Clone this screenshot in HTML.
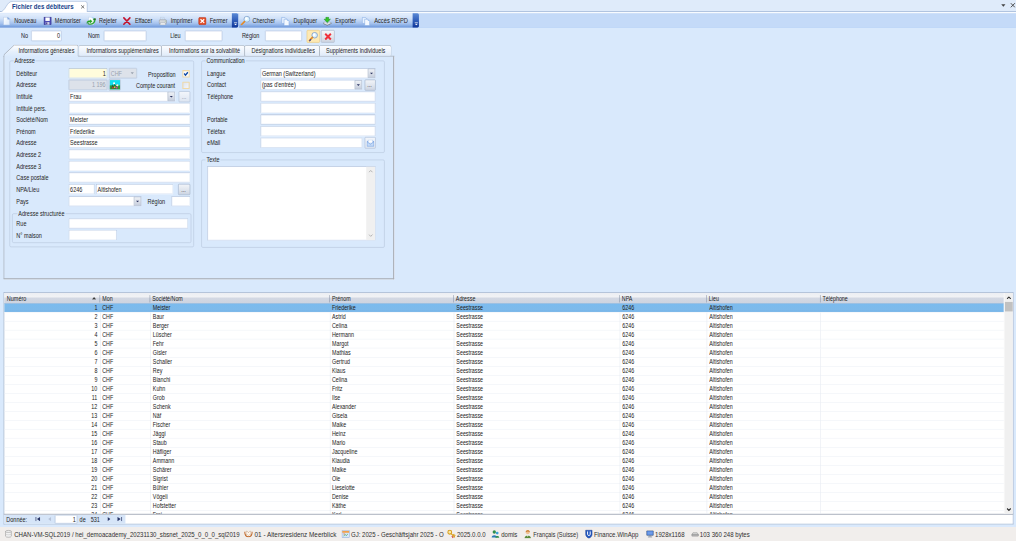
<!DOCTYPE html>
<html lang="fr"><head><meta charset="utf-8"><title>Fichier des débiteurs</title>
<style>
html,body{margin:0;padding:0;background:#d9e9fc;overflow:hidden;width:1016px;height:541px;}
#app{-webkit-text-stroke:0.05px;position:absolute;left:0;top:0;width:1928px;height:1027px;transform-origin:0 0;background:#d9e9fc;font-family:"Liberation Sans",sans-serif;font-size:11px;color:#262626;overflow:hidden;}
#app *{box-sizing:border-box;}
.a{position:absolute;white-space:nowrap;}
.t{position:absolute;white-space:nowrap;line-height:14px;height:14px;}
/* document tab strip */
#dts{left:0;top:0;width:1928px;height:23px;background:#dfebfa;border-bottom:2px solid #aec2de;}
#dtab{left:0px;top:2px;width:168px;height:22px;}
#dtab .t{left:22.500px;top:4px;font-weight:bold;color:#15428b;font-size:11.5px;}
#tbbg{left:0;top:23px;width:1928px;height:29.5px;background:#c4daf8;border-top:2px solid #fff;border-bottom:1px solid #bdd6f7;}
.ts{top:25px;height:27px;border-radius:0 3px 3px 0;background:linear-gradient(#e6f0fd 0%,#cfe0f8 38%,#a6c3ee 72%,#7fa6e2 92%,#6a93d6 100%);}
.ts .ov{position:absolute;right:0;top:0;width:12px;height:27px;border-radius:0 3px 3px 0;background:linear-gradient(#5b8ad6 0%,#3563bd 45%,#11389a 100%);}
.ts .ov:after{content:"";position:absolute;left:4px;bottom:4px;border:3px solid transparent;border-top:3px solid #fff;border-bottom:0;}
.ts .ov:before{content:"";position:absolute;left:4px;bottom:9px;width:6px;height:1px;background:#fff;}
.ts .t{top:7px;}
.ic{position:absolute;width:16px;height:16px;top:6.500px;}
/* inputs */
.in{position:absolute;height:20px;background:#fff;border:1px solid #9ab2d7;border-color:#819bc4 #a3badb #a3badb #8aa3ca;box-shadow:inset 0 0 0 1px #d9e4f4;border-radius:1.500px;line-height:16px;padding:2px 2px 0 2px;font-size:11px;white-space:nowrap;overflow:hidden;}
.in.r{text-align:right;}
.in.y{background:#fffcdc;}
.in.g{background:#dde2ea;color:#9aa3b0;border-color:#b4c2d8;box-shadow:inset 0 0 0 1px #d0d9e6;}
.dd{position:absolute;right:0;top:0;width:14px;height:18px;background:linear-gradient(#eff2f7,#dde2eb 45%,#c5cddc);border:1px solid #97a6bd;border-radius:1px;}
.dd:after{content:"";position:absolute;left:3px;top:6.500px;border:3px solid transparent;border-top:3.500px solid #2a3360;border-bottom:0;}
.btn{position:absolute;height:21px;background:linear-gradient(#f3f6fb,#dde5f1);border:1px solid #aab9cf;border-radius:2px;text-align:center;line-height:21px;font-size:11px;color:#8a96a8;}
/* tabs */
.tab{position:absolute;top:86px;height:20px;border:1px solid #92979f;border-bottom:0;border-radius:3px 4px 0 0;background:linear-gradient(#fcfdff,#eef4fc 50%,#e0ebf9);text-align:center;line-height:20px;white-space:nowrap;}
.tab.act{top:85px;height:22px;background:#d9e9fc;z-index:3;line-height:20px;}
#page{left:7px;top:106px;width:740.500px;height:423.500px;border:1px solid #9a9fa6;border-top-color:#999ea6;border-bottom:2px solid #a8acb2;border-right:2px solid #a8acb2;background:#d9e9fc;box-shadow:1px 1px 0 #ecf3fd;}
.gb{position:absolute;border:1px solid #b3c2d9;border-radius:3px;}
.gb>.lg{position:absolute;top:-8px;left:7px;background:#d9e9fc;padding:0 2px;line-height:14px;height:14px;white-space:nowrap;}
.cb{position:absolute;width:14px;height:14px;border:2px solid #f0d9a8;border-radius:1px;background:linear-gradient(135deg,#dfe5ef,#f4f6fa);}
/* grid */
#grid{left:7px;top:555px;width:1916px;height:422px;background:#fff;border:1px solid #8398b8;border-bottom:2px solid #a4abb8;overflow:hidden;}
#gh{position:absolute;left:0;top:0;width:1897px;height:20px;background:linear-gradient(#eceef3 0%,#f1f2f5 38%,#d3d8e3 52%,#ced4e0 100%);border-bottom:1px solid #7d92b6;}
#gh span{position:absolute;top:0;height:19px;line-height:22px;padding-left:4px;font-size:10.5px;}
#gh span:before{content:"";position:absolute;left:-1px;top:4px;width:1px;height:14px;background:#8792a5;}
#gh span:first-child:before{display:none;}
.gr{position:absolute;left:0;width:1897px;height:17.1px;border-bottom:1px solid #ecf0f6;}
.gr.sel{background:linear-gradient(#7bbbee,#7ebaeb 70%,#74b3e8);}
.c{position:absolute;top:0;height:17px;line-height:17px;font-size:10.5px;white-space:nowrap;overflow:hidden;padding-left:4px;border-left:1px solid #e3e8f0;}
.gr.sel .c{border-left-color:transparent;}
.c1{left:0;width:182px;text-align:right;padding-right:5px;border-left:0;}
.c2{left:182px;width:95px;padding-left:2.500px;}
.c3{left:277px;width:341px;}
.c4{left:618px;width:235px;padding-left:2.500px;}
.c5{left:853px;width:315px;}
.c6{left:1168px;width:165px;}
.c7{left:1333px;width:216px;}
.c8{left:1549px;width:348px;}
#vsb{position:absolute;right:0;top:0;width:17px;height:419px;background:#f0f0f0;border-left:1px solid #fff;}
#nav{left:7px;top:977px;width:1916px;height:17.500px;background:#fff;border:1px solid #8fa5c5;border-top:0;}
#navl{position:absolute;left:0;top:0;width:230px;height:16.500px;background:#d6e5f8;}
#sb{left:0;top:1000px;width:1928px;height:27px;background:#f1eeec;font-size:12px;}
#sb .t{top:7px;font-size:12px;line-height:14px;color:#303030;font-family:"Liberation Sans","DejaVu Sans",sans-serif;}
.si{position:absolute;top:6px;width:14px;height:14px;}

.t{font-size:12.6px;transform:scaleX(.83);transform-origin:0 50%;}
i{display:inline-block;font-style:normal;font-size:12.6px;transform:scaleX(.83);transform-origin:0 50%;white-space:nowrap;}
.in.r>i,.c1>i{transform-origin:100% 50%;}
.tab>i{transform-origin:50% 50%;}
#dtab .t{font-size:12.6px;transform:scaleX(.92);}
#sb .t{font-size:13px;transform:scaleX(.886);top:7.800px;-webkit-text-stroke:0;}

.gb>.lg{font-size:12.6px;transform:scaleX(.83);transform-origin:0 50%;}

#grid{-webkit-text-stroke:0;}
#grid i{font-size:12.2px;color:#1a1a1a;}

.in>i{vertical-align:top;line-height:17px;height:17px;}

.in.f{box-shadow:inset 0 0 0 1px #f2f6fb;border-color:#a4bada;}

.btn.d{background:linear-gradient(#f2f4f8,#e1e6ee 50%,#ccd4e1);border-color:#9aa7bb;color:#4a3a3a;}

</style></head>
<body>
<div id="app" style="transform:scale(0.52697);">
<!-- document tab strip -->
<div id="dts" class="a"></div>
<div id="dtab" class="a">
<svg class="a" style="left:0;top:0" width="168" height="23" viewBox="0 0 168 23"><path d="M-1 21.500 C5 20.500 8 16 11.500 10.500 C15 5 17.500 0.500 25 0.500 L161 0.500 Q165.500 0.500 165.500 5 L165.500 23 L-1 23 Z" fill="#fff" stroke="#8faad2" stroke-width="1"/><rect x="0" y="21.500" width="168" height="2" fill="#fff"/></svg>
<span class="t">Fichier des débiteurs</span>
<svg class="a" style="left:152.500px;top:6.500px" width="8" height="8" viewBox="0 0 8 8"><path d="M1 1 L7 7 M7 1 L1 7" stroke="#555" stroke-width="1.500" fill="none"/></svg>
</div>
<svg class="a" style="left:1899px;top:7px" width="10" height="8" viewBox="0 0 10 8"><path d="M1 1 L9 1 L5 6 Z" fill="#444"/></svg>
<svg class="a" style="left:1916.5px;top:5px" width="10" height="10" viewBox="0 0 10 10"><path d="M1 1 L9 9 M9 1 L1 9" stroke="#444" stroke-width="1.8" fill="none"/></svg>

<!-- toolbars -->
<div id="tbbg" class="a"></div>
<div class="ts a" style="left:0;width:452px">
  <svg class="ic" style="left:6px" viewBox="0 0 16 16"><defs><linearGradient id="gdoc" x1="0" y1="0" x2="1" y2="1"><stop offset="0" stop-color="#ffffff"/><stop offset="1" stop-color="#d9e8fb"/></linearGradient></defs><path d="M0.500 0.500 L8.500 0.500 L12.500 4.500 L12.500 15.500 L0.500 15.500 Z" fill="url(#gdoc)" stroke="#a9c0e2"/><path d="M8.500 0.500 L8.500 4.500 L12.500 4.500 Z" fill="#7aa7e6" stroke="#86a9dd" stroke-width=".6"/></svg>
  <span class="t" style="left:27px">Nouveau</span>
  <svg class="ic" style="left:82px;width:16.500px;height:17.500px;top:5.500px" viewBox="0 0 16 16" preserveAspectRatio="none"><rect x="1.5" y="1.5" width="13" height="13" fill="#4c4cb6" stroke="#34348c"/><rect x="4" y="2" width="8" height="6" fill="#fff"/><rect x="4.500" y="10" width="7" height="4.500" fill="#cfd3e6"/><rect x="5.500" y="10.500" width="2" height="3.500" fill="#3a2f8a"/></svg>
  <span class="t" style="left:104px">Mémoriser</span>
  <svg class="ic" style="left:164px;width:18px;height:16px" viewBox="0 0 18 16"><path d="M4 0.500 L11 0.500 L14 3.500 L14 14.500 L4 14.500 Z" fill="#fdfeff" stroke="#b5c9e8" stroke-width=".8"/><path d="M9 0.500 L14 0.500 L14 5 Z" fill="#a9d4f6"/><path d="M0.500 12.500 C0.500 8 3.500 6.500 7 7.500 L7 5.500 L11 8.500 L7 11.500 L7 10 C4.500 9.500 2.500 10.500 0.500 12.500 Z" fill="#22b022" stroke="#128012" stroke-width=".7"/><path d="M3 12 C8 14.500 14.500 12.500 15 6 L13.200 6 L13.200 3.500 L17.500 3.500 L17.500 6 L17 6 C16.500 13.500 8.500 16.500 2.500 13.500 Z" fill="#2bb52b" stroke="#128012" stroke-width=".6"/><rect x="14.500" y="3.200" width="3" height="2.200" fill="#2a4a2a"/></svg>
  <span class="t" style="left:188px">Rejeter</span>
  <svg class="ic" style="left:233px" viewBox="0 0 16 16"><path d="M2 2 L13.500 14 M13.500 2 L2 14" stroke="#c4122c" stroke-width="3" stroke-linecap="round" fill="none"/></svg>
  <span class="t" style="left:256px">Effacer</span>
  <svg class="ic" style="left:301px" viewBox="0 0 16 16"><path d="M4 0.500 L10 0.500 L12 6 L3 6 Z" fill="#f7fbff" stroke="#a9bad4"/><path d="M5 2.500 L9.500 2.500 M4.800 4 L10 4" stroke="#8ab4e8" stroke-width=".8"/><path d="M1 7.500 Q1 5.500 3 5.500 L13 5.500 Q15 5.500 15 7.500 L15 11.500 Q15 13 13 13 L3 13 Q1 13 1 11.500 Z" fill="#d4d7dc" stroke="#8d939c"/><path d="M3.500 11 L12.500 11 L13.500 15.500 L2.500 15.500 Z" fill="#eceef1" stroke="#9aa0a8" stroke-width=".8"/><circle cx="12.500" cy="8" r=".8" fill="#5fae4a"/></svg>
  <span class="t" style="left:324px">Imprimer</span>
  <svg class="ic" style="left:376px" viewBox="0 0 16 16"><rect x="1" y="1" width="14" height="14" rx="2.500" fill="#e2502a" stroke="#b5321a"/><path d="M4.500 4.500 L11.500 11.500 M11.500 4.500 L4.500 11.500" stroke="#fff" stroke-width="2.400" fill="none"/></svg>
  <span class="t" style="left:398px">Fermer</span>
  <div class="ov"></div>
</div>
<div class="ts a" style="left:454px;width:341px">
  <svg class="ic" style="left:2px;top:4.500px;width:19px;height:18px" viewBox="0 0 19 18"><circle cx="12.500" cy="6.500" r="5.600" fill="#d4f0ff" stroke="#86a2cc" stroke-width="1.500"/><circle cx="11.500" cy="5.500" r="2.600" fill="#ffffff"/><path d="M8 11 L2 17" stroke="#e58a25" stroke-width="3" stroke-linecap="round"/></svg>
  <span class="t" style="left:25px">Chercher</span>
  <svg class="ic" style="left:79px;width:17px;height:17px" viewBox="0 0 17 17"><path d="M1.500 1 L7.500 1 L10.500 4 L10.500 12.500 L1.500 12.500 Z" fill="#e6f1ff" stroke="#7fa6e0"/><path d="M6 4.500 L12 4.500 L15.500 8 L15.500 16.500 L6 16.500 Z" fill="#f4f9ff" stroke="#7fa6e0"/><path d="M12 4.500 L12 8 L15.500 8 Z" fill="#9cc2f2"/></svg>
  <span class="t" style="left:103px">Dupliquer</span>
  <svg class="ic" style="left:158px;width:18px;height:17px" viewBox="0 0 18 17"><path d="M6.500 0.500 L11.500 0.500 L11.500 4.500 L15 4.500 L9 10.500 L3 4.500 L6.500 4.500 Z" fill="#34c428" stroke="#168a16" stroke-width=".9"/><path d="M1 11.500 L9 15.500 L17 11.500 L17 13 L9 17 L1 13 Z" fill="#6f747c"/><path d="M1 11.500 L9 15.500 L17 11.500 L12.500 9.500 L9 12.500 L5.500 9.500 Z" fill="#e9ecf0" stroke="#7d838c" stroke-width=".7"/></svg>
  <span class="t" style="left:182px">Exporter</span>
  <svg class="ic" style="left:232px;width:17px;height:17px" viewBox="0 0 17 17"><path d="M1.500 1 L7.500 1 L10.500 4 L10.500 12.500 L1.500 12.500 Z" fill="#e6f1ff" stroke="#7fa6e0"/><path d="M6 4.500 L12 4.500 L15.500 8 L15.500 16.500 L6 16.500 Z" fill="#f4f9ff" stroke="#7fa6e0"/><path d="M12 4.500 L12 8 L15.500 8 Z" fill="#9cc2f2"/></svg>
  <span class="t" style="left:256px;transform:scaleX(.865)">Accès RGPD</span>
  <div class="ov"></div>
</div>

<!-- filter row -->
<span class="t" style="left:40px;top:61px">No</span><div class="in r f" style="left:59px;top:58px;width:58px"><i>0</i></div>
<span class="t" style="left:167px;top:61px">Nom</span><div class="in f" style="left:197px;top:58px;width:81px"></div>
<span class="t" style="left:323px;top:61px">Lieu</span><div class="in f" style="left:351px;top:58px;width:71px"></div>
<span class="t" style="left:459px;top:61px">Région</span><div class="in f" style="left:503px;top:58px;width:70px"></div>
<div class="a" style="left:582px;top:57px;width:25px;height:24px;background:#fde9b4;border:1px solid #ecc66f;border-radius:2px"><svg class="a" style="left:2px;top:2px" width="19" height="19" viewBox="0 0 18 17"><circle cx="11.500" cy="6" r="5" fill="#d9f1ff" stroke="#7f9cc8" stroke-width="1.500"/><circle cx="10.500" cy="5" r="2.200" fill="#ffffff"/><path d="M7.500 10 L2 15.500" stroke="#e08a2a" stroke-width="3" stroke-linecap="round"/><path d="M4.500 14 L2.500 16" stroke="#3a4a9a" stroke-width="2" stroke-linecap="round"/></svg></div>
<div class="a" style="left:609px;top:57px;width:26px;height:24px;background:linear-gradient(#f4f6fa,#e3e7ee 50%,#cdd4e0);border:1px solid #a3abbb;border-radius:2px"><svg class="a" style="left:5px;top:4px" width="15" height="15" viewBox="0 0 14 14"><path d="M2 2 L12 12 M12 2 L2 12" stroke="#f0303c" stroke-width="3.400" fill="none"/></svg></div>

<!-- tab control -->
<div id="page" class="a"></div>
<div class="tab act" style="left:7px;width:142px;border:0;background:none"><svg class="a" style="left:0;top:0" width="142" height="23" viewBox="0 0 142 23"><defs><linearGradient id="gtab" x1="0" y1="0" x2="0" y2="1"><stop offset="0" stop-color="#ffffff"/><stop offset=".55" stop-color="#e6f0fc"/><stop offset="1" stop-color="#d9e9fc"/></linearGradient></defs><path d="M0.500 23 L0.500 19 L20 0.500 L138 0.500 Q141.500 0.500 141.500 4 L141.500 23 Z" fill="url(#gtab)"/><path d="M0.500 23 L0.500 19 L20 0.500 L138 0.500 Q141.500 0.500 141.500 4 L141.500 21.500" fill="none" stroke="#868c96"/></svg><i style="position:relative;margin-left:17px;top:1px">Informations générales</i></div>
<div class="tab" style="left:149px;width:158px;padding-right:2.500px"><i>Informations supplémentaires</i></div>
<div class="tab" style="left:306px;width:158.500px"><i>Informations sur la solvabilité</i></div>
<div class="tab" style="left:463.500px;width:143.500px"><i>Désignations individuelles</i></div>
<div class="tab" style="left:606px;width:137px"><i>Suppléments individuels</i></div>

<!-- Adresse group -->
<div class="gb" style="left:18px;top:115px;width:350px;height:354px"><span class="lg">Adresse</span></div>
<span class="t" style="left:31px;top:133px">Débiteur</span>
<div class="in r y" style="left:130px;top:129px;width:74px"><i>1</i></div>
<div class="in g" style="left:207px;top:129px;width:53px"><i>CHF</i><span class="a" style="right:5px;top:7px;border:3px solid transparent;border-top:4px solid #9aa3b0;border-bottom:0"></span></div>
<span class="t" style="left:281px;top:135px">Proposition</span>
<div class="cb" style="left:346px;top:133px;background:#fbfcfe"><svg class="a" style="left:0;top:0" width="10" height="10" viewBox="0 0 10 10"><path d="M1.500 4.500 L4 7.500 L8.500 2" stroke="#0f4aa8" stroke-width="2.600" fill="none"/></svg></div>
<span class="t" style="left:31px;top:155px">Adresse</span>
<div class="in r g" style="left:130px;top:151px;width:74px"><i>1 196</i></div>
<div class="a" style="left:206px;top:150px;width:23px;height:22px;background:#d3dbe8;border:1px solid #b4c0d3;border-radius:2px"><svg class="a" style="left:1px;top:1px" width="20" height="18" viewBox="0 0 20 18"><rect x="0" y="0" width="20" height="18" fill="#12dfee"/><rect x="0" y="10" width="20" height="8" fill="#2f9a3a"/><path d="M3 16 L5 8 L8 12 L9 6 L12 11 L14 7 L16 16 Z" fill="#276a3a"/><circle cx="8.500" cy="6" r="2" fill="#ffffff"/><circle cx="14.500" cy="10" r="2.200" fill="#f4f0e0"/><rect x="12" y="13" width="3" height="3" fill="#d040a0"/><rect x="5" y="13" width="2.500" height="3" fill="#e03030"/><rect x="8.500" y="12" width="2.500" height="3" fill="#e8d040"/></svg></div>
<span class="t" style="left:258px;top:155.500px">Compte courant</span>
<div class="cb" style="left:346px;top:155px"></div>
<span class="t" style="left:31px;top:177px">Intitulé</span>
<div class="in" style="left:130px;top:173px;width:203px"><i>Frau</i><div class="dd"></div></div>
<div class="btn" style="left:339px;top:173px;width:22px"><i>...</i></div>
<span class="t" style="left:31px;top:199px">Intitulé pers.</span><div class="in" style="left:130px;top:195px;width:231px"></div>
<span class="t" style="left:31px;top:221px">Société/Nom</span><div class="in" style="left:130px;top:217px;width:231px"><i>Meister</i></div>
<span class="t" style="left:31px;top:243px">Prénom</span><div class="in" style="left:130px;top:239px;width:231px"><i>Friederike</i></div>
<span class="t" style="left:31px;top:265px">Adresse</span><div class="in" style="left:130px;top:261px;width:231px"><i>Seestrasse</i></div>
<span class="t" style="left:31px;top:287px">Adresse 2</span><div class="in" style="left:130px;top:283px;width:231px"></div>
<span class="t" style="left:31px;top:309px">Adresse 3</span><div class="in" style="left:130px;top:305px;width:231px"></div>
<span class="t" style="left:31px;top:331px">Case postale</span><div class="in" style="left:130px;top:327px;width:231px"></div>
<span class="t" style="left:31px;top:353px">NPA/Lieu</span><div class="in" style="left:130px;top:349px;width:50px"><i>6246</i></div><div class="in" style="left:182px;top:349px;width:147px"><i>Altishofen</i></div>
<div class="btn d" style="left:338px;top:349px;width:23px"><i>...</i></div>
<span class="t" style="left:31px;top:376px">Pays</span><div class="in" style="left:130px;top:372px;width:139px"><div class="dd"></div></div>
<span class="t" style="left:280px;top:377px">Région</span><div class="in" style="left:325px;top:372px;width:36px"></div>
<div class="gb" style="left:23px;top:405px;width:340px;height:56px"><span class="lg" style="left:9px">Adresse structurée</span></div>
<span class="t" style="left:31px;top:417px">Rue</span><div class="in" style="left:130px;top:413.5px;width:227px"></div>
<span class="t" style="left:31px;top:440px">N° maison</span><div class="in" style="left:130px;top:436px;width:92px"></div>

<!-- Communication group -->
<div class="gb" style="left:382px;top:115px;width:348px;height:175px"><span class="lg">Communication</span></div>
<span class="t" style="left:393px;top:133px">Langue</span><div class="in" style="left:494px;top:129px;width:219px"><i>German (Switzerland)</i><div class="dd"></div></div>
<span class="t" style="left:393px;top:155px">Contact</span><div class="in" style="left:494px;top:151px;width:194px"><i>(pas d'entrée)</i><div class="dd"></div></div>
<div class="btn d" style="left:692px;top:151px;width:21px"><i>...</i></div>
<span class="t" style="left:393px;top:177px">Téléphone</span><div class="in" style="left:494px;top:173px;width:219px"></div>
<div class="in" style="left:494px;top:195px;width:219px"></div>
<span class="t" style="left:393px;top:221px">Portable</span><div class="in" style="left:494px;top:217px;width:219px"></div>
<span class="t" style="left:393px;top:243px">Téléfax</span><div class="in" style="left:494px;top:239px;width:219px"></div>
<span class="t" style="left:393px;top:265px">eMail</span><div class="in" style="left:494px;top:261px;width:194px"></div>
<div class="btn" style="left:692px;top:260px;width:21px;height:22px"><svg class="a" style="left:3px;top:4px" width="14" height="13" viewBox="0 0 14 13"><rect x="0.500" y="3.500" width="13" height="9" fill="#d6e7fb" stroke="#6d9ae0"/><rect x="2.500" y="0.500" width="9" height="6" fill="#fff" stroke="#9bbcea"/><path d="M0.500 4 L7 9 L13.500 4 L13.500 12.500 L0.500 12.500 Z" fill="#c6dcf8" stroke="#6d9ae0"/></svg></div>

<!-- Texte group -->
<div class="gb" style="left:382px;top:303px;width:348px;height:167px"><span class="lg">Texte</span></div>
<div class="in" style="left:393px;top:315px;width:320px;height:142px"><div class="a" style="right:0;top:0;width:17px;height:140px;background:#f0f0f0"><svg class="a" style="left:4px;top:6px" width="9" height="6" viewBox="0 0 9 6"><path d="M1 5 L4.500 1.500 L8 5" stroke="#9a9a9a" stroke-width="1.300" fill="none"/></svg><svg class="a" style="left:4px;bottom:6px" width="9" height="6" viewBox="0 0 9 6"><path d="M1 1 L4.500 4.500 L8 1" stroke="#9a9a9a" stroke-width="1.300" fill="none"/></svg></div></div>

<!-- grid -->
<div id="grid" class="a">
<div id="gh"><span style="left:0;width:182px;padding-left:5px"><i style="transform:scaleX(.855)">Numéro</i><svg class="a" style="left:166px;top:7px" width="9" height="6" viewBox="0 0 9 6"><path d="M0.500 5.500 L4.500 0.500 L8.500 5.500 Z" fill="#3a3a3a"/></svg></span><span style="left:182px;width:95px"><i>Mon</i></span><span style="left:277px;width:341px"><i>Société/Nom</i></span><span style="left:618px;width:235px"><i>Prénom</i></span><span style="left:853px;width:315px"><i>Adresse</i></span><span style="left:1168px;width:165px"><i>NPA</i></span><span style="left:1333px;width:216px"><i>Lieu</i></span><span style="left:1549px;width:348px"><i>Téléphone</i></span></div>
<div class="gr sel" style="top:20.00px"><span class="c c1"><i>1</i></span><span class="c c2"><i>CHF</i></span><span class="c c3"><i>Meister</i></span><span class="c c4"><i>Friederike</i></span><span class="c c5"><i>Seestrasse</i></span><span class="c c6"><i>6246</i></span><span class="c c7"><i>Altishofen</i></span><span class="c c8"></span></div>
<div class="gr" style="top:37.10px"><span class="c c1"><i>2</i></span><span class="c c2"><i>CHF</i></span><span class="c c3"><i>Baur</i></span><span class="c c4"><i>Astrid</i></span><span class="c c5"><i>Seestrasse</i></span><span class="c c6"><i>6246</i></span><span class="c c7"><i>Altishofen</i></span><span class="c c8"></span></div>
<div class="gr" style="top:54.20px"><span class="c c1"><i>3</i></span><span class="c c2"><i>CHF</i></span><span class="c c3"><i>Berger</i></span><span class="c c4"><i>Celina</i></span><span class="c c5"><i>Seestrasse</i></span><span class="c c6"><i>6246</i></span><span class="c c7"><i>Altishofen</i></span><span class="c c8"></span></div>
<div class="gr" style="top:71.30px"><span class="c c1"><i>4</i></span><span class="c c2"><i>CHF</i></span><span class="c c3"><i>Lüscher</i></span><span class="c c4"><i>Hermann</i></span><span class="c c5"><i>Seestrasse</i></span><span class="c c6"><i>6246</i></span><span class="c c7"><i>Altishofen</i></span><span class="c c8"></span></div>
<div class="gr" style="top:88.40px"><span class="c c1"><i>5</i></span><span class="c c2"><i>CHF</i></span><span class="c c3"><i>Fehr</i></span><span class="c c4"><i>Margot</i></span><span class="c c5"><i>Seestrasse</i></span><span class="c c6"><i>6246</i></span><span class="c c7"><i>Altishofen</i></span><span class="c c8"></span></div>
<div class="gr" style="top:105.50px"><span class="c c1"><i>6</i></span><span class="c c2"><i>CHF</i></span><span class="c c3"><i>Gisler</i></span><span class="c c4"><i>Mathias</i></span><span class="c c5"><i>Seestrasse</i></span><span class="c c6"><i>6246</i></span><span class="c c7"><i>Altishofen</i></span><span class="c c8"></span></div>
<div class="gr" style="top:122.60px"><span class="c c1"><i>7</i></span><span class="c c2"><i>CHF</i></span><span class="c c3"><i>Schaller</i></span><span class="c c4"><i>Gertrud</i></span><span class="c c5"><i>Seestrasse</i></span><span class="c c6"><i>6246</i></span><span class="c c7"><i>Altishofen</i></span><span class="c c8"></span></div>
<div class="gr" style="top:139.70px"><span class="c c1"><i>8</i></span><span class="c c2"><i>CHF</i></span><span class="c c3"><i>Rey</i></span><span class="c c4"><i>Klaus</i></span><span class="c c5"><i>Seestrasse</i></span><span class="c c6"><i>6246</i></span><span class="c c7"><i>Altishofen</i></span><span class="c c8"></span></div>
<div class="gr" style="top:156.80px"><span class="c c1"><i>9</i></span><span class="c c2"><i>CHF</i></span><span class="c c3"><i>Bianchi</i></span><span class="c c4"><i>Celina</i></span><span class="c c5"><i>Seestrasse</i></span><span class="c c6"><i>6246</i></span><span class="c c7"><i>Altishofen</i></span><span class="c c8"></span></div>
<div class="gr" style="top:173.90px"><span class="c c1"><i>10</i></span><span class="c c2"><i>CHF</i></span><span class="c c3"><i>Kuhn</i></span><span class="c c4"><i>Fritz</i></span><span class="c c5"><i>Seestrasse</i></span><span class="c c6"><i>6246</i></span><span class="c c7"><i>Altishofen</i></span><span class="c c8"></span></div>
<div class="gr" style="top:191.00px"><span class="c c1"><i>11</i></span><span class="c c2"><i>CHF</i></span><span class="c c3"><i>Grob</i></span><span class="c c4"><i>Ilse</i></span><span class="c c5"><i>Seestrasse</i></span><span class="c c6"><i>6246</i></span><span class="c c7"><i>Altishofen</i></span><span class="c c8"></span></div>
<div class="gr" style="top:208.10px"><span class="c c1"><i>12</i></span><span class="c c2"><i>CHF</i></span><span class="c c3"><i>Schenk</i></span><span class="c c4"><i>Alexander</i></span><span class="c c5"><i>Seestrasse</i></span><span class="c c6"><i>6246</i></span><span class="c c7"><i>Altishofen</i></span><span class="c c8"></span></div>
<div class="gr" style="top:225.20px"><span class="c c1"><i>13</i></span><span class="c c2"><i>CHF</i></span><span class="c c3"><i>Näf</i></span><span class="c c4"><i>Gisela</i></span><span class="c c5"><i>Seestrasse</i></span><span class="c c6"><i>6246</i></span><span class="c c7"><i>Altishofen</i></span><span class="c c8"></span></div>
<div class="gr" style="top:242.30px"><span class="c c1"><i>14</i></span><span class="c c2"><i>CHF</i></span><span class="c c3"><i>Fischer</i></span><span class="c c4"><i>Maike</i></span><span class="c c5"><i>Seestrasse</i></span><span class="c c6"><i>6246</i></span><span class="c c7"><i>Altishofen</i></span><span class="c c8"></span></div>
<div class="gr" style="top:259.40px"><span class="c c1"><i>15</i></span><span class="c c2"><i>CHF</i></span><span class="c c3"><i>Jäggi</i></span><span class="c c4"><i>Heinz</i></span><span class="c c5"><i>Seestrasse</i></span><span class="c c6"><i>6246</i></span><span class="c c7"><i>Altishofen</i></span><span class="c c8"></span></div>
<div class="gr" style="top:276.50px"><span class="c c1"><i>16</i></span><span class="c c2"><i>CHF</i></span><span class="c c3"><i>Staub</i></span><span class="c c4"><i>Mario</i></span><span class="c c5"><i>Seestrasse</i></span><span class="c c6"><i>6246</i></span><span class="c c7"><i>Altishofen</i></span><span class="c c8"></span></div>
<div class="gr" style="top:293.60px"><span class="c c1"><i>17</i></span><span class="c c2"><i>CHF</i></span><span class="c c3"><i>Häfliger</i></span><span class="c c4"><i>Jacqueline</i></span><span class="c c5"><i>Seestrasse</i></span><span class="c c6"><i>6246</i></span><span class="c c7"><i>Altishofen</i></span><span class="c c8"></span></div>
<div class="gr" style="top:310.70px"><span class="c c1"><i>18</i></span><span class="c c2"><i>CHF</i></span><span class="c c3"><i>Ammann</i></span><span class="c c4"><i>Klaudia</i></span><span class="c c5"><i>Seestrasse</i></span><span class="c c6"><i>6246</i></span><span class="c c7"><i>Altishofen</i></span><span class="c c8"></span></div>
<div class="gr" style="top:327.80px"><span class="c c1"><i>19</i></span><span class="c c2"><i>CHF</i></span><span class="c c3"><i>Schärer</i></span><span class="c c4"><i>Maike</i></span><span class="c c5"><i>Seestrasse</i></span><span class="c c6"><i>6246</i></span><span class="c c7"><i>Altishofen</i></span><span class="c c8"></span></div>
<div class="gr" style="top:344.90px"><span class="c c1"><i>20</i></span><span class="c c2"><i>CHF</i></span><span class="c c3"><i>Sigrist</i></span><span class="c c4"><i>Ole</i></span><span class="c c5"><i>Seestrasse</i></span><span class="c c6"><i>6246</i></span><span class="c c7"><i>Altishofen</i></span><span class="c c8"></span></div>
<div class="gr" style="top:362.00px"><span class="c c1"><i>21</i></span><span class="c c2"><i>CHF</i></span><span class="c c3"><i>Bühler</i></span><span class="c c4"><i>Lieselotte</i></span><span class="c c5"><i>Seestrasse</i></span><span class="c c6"><i>6246</i></span><span class="c c7"><i>Altishofen</i></span><span class="c c8"></span></div>
<div class="gr" style="top:379.10px"><span class="c c1"><i>22</i></span><span class="c c2"><i>CHF</i></span><span class="c c3"><i>Vögeli</i></span><span class="c c4"><i>Denise</i></span><span class="c c5"><i>Seestrasse</i></span><span class="c c6"><i>6246</i></span><span class="c c7"><i>Altishofen</i></span><span class="c c8"></span></div>
<div class="gr" style="top:396.20px"><span class="c c1"><i>23</i></span><span class="c c2"><i>CHF</i></span><span class="c c3"><i>Hofstetter</i></span><span class="c c4"><i>Käthe</i></span><span class="c c5"><i>Seestrasse</i></span><span class="c c6"><i>6246</i></span><span class="c c7"><i>Altishofen</i></span><span class="c c8"></span></div>
<div class="gr" style="top:413.30px"><span class="c c1"><i>24</i></span><span class="c c2"><i>CHF</i></span><span class="c c3"><i>Frei</i></span><span class="c c4"><i>Karl</i></span><span class="c c5"><i>Seestrasse</i></span><span class="c c6"><i>6246</i></span><span class="c c7"><i>Altishofen</i></span><span class="c c8"></span></div>
<div id="vsb"><svg class="a" style="left:4px;top:6px" width="9" height="6" viewBox="0 0 9 6"><path d="M1 5 L4.500 1.500 L8 5" stroke="#333" stroke-width="2.200" fill="none"/></svg><div class="a" style="left:1px;top:17px;width:15px;height:18px;background:#c1c1c1"></div><svg class="a" style="left:4px;bottom:5px" width="9" height="6" viewBox="0 0 9 6"><path d="M1 1 L4.500 4.500 L8 1" stroke="#333" stroke-width="2.200" fill="none"/></svg></div>
</div>
<div id="nav" class="a"><div id="navl"></div>
<span class="t" style="left:4px;top:1.500px">Donnée:</span>
<svg class="a" style="left:59px;top:4px" width="10" height="8" viewBox="0 0 10 8"><path d="M1 0 L1 8" stroke="#2a3768" stroke-width="1.600"/><path d="M9 0 L3 4 L9 8 Z" fill="#2a3768"/></svg>
<svg class="a" style="left:83px;top:4px" width="6" height="8" viewBox="0 0 6 8"><path d="M6 0 L0.500 4 L6 8 Z" fill="#b5c2d8"/></svg>
<div class="in r" style="left:96px;top:0px;width:43px;height:16.500px;padding-top:0;border-color:#a9bbd6;line-height:14px"><i>1</i></div>
<span class="t" style="left:143px;top:1.500px">de</span>
<span class="t" style="left:164px;top:1.500px">531</span>
<svg class="a" style="left:196px;top:4px" width="6" height="8" viewBox="0 0 6 8"><path d="M0 0 L5.500 4 L0 8 Z" fill="#2a3768"/></svg>
<svg class="a" style="left:214px;top:4px" width="10" height="8" viewBox="0 0 10 8"><path d="M9 0 L9 8" stroke="#2a3768" stroke-width="1.600"/><path d="M1 0 L7 4 L1 8 Z" fill="#2a3768"/></svg>
</div>

<!-- status bar -->
<div id="sb" class="a">
<svg class="si" style="left:9px;width:14px;height:16px;top:5px" viewBox="0 0 14 16"><path d="M1.500 3.500 C1.500 0.800 12.500 0.800 12.500 3.500 L12.500 12.500 C12.500 15.200 1.500 15.200 1.500 12.500 Z" fill="#f2f2f2" stroke="#8e8e8e"/><path d="M1.500 3.500 C1.500 6 12.500 6 12.500 3.500" fill="none" stroke="#8e8e8e"/><path d="M1.500 8 C1.500 10.500 12.500 10.500 12.500 8" fill="none" stroke="#b5b5b5" stroke-width=".8"/></svg>

<span class="t" style="left:27px">CHAN-VM-SQL2019 / hei_demoacademy_20231130_sbsnet_2025_0_0_0_sql2019</span>
<svg class="si" style="left:463px;width:17px;height:14px" viewBox="0 0 17 14"><path d="M1.500 3 C1.500 9 4 12.500 8.500 12.500 C13 12.500 15.500 9 15.500 3" fill="#fff" stroke="#c0682a" stroke-width="2"/><path d="M4 2 C6 2 8 3 8.500 5 C9 3 11 2 13 2 L13 8.500 C11 8.500 9.500 9 8.500 10.500 C7.500 9 6 8.500 4 8.500 Z" fill="#fdf6ec" stroke="#b9855a" stroke-width=".8"/></svg>

<span class="t" style="left:483px;transform:scaleX(.93)">01 - Altersresidenz Meerblick</span>
<svg class="si" style="left:648px;width:16px;height:15px" viewBox="0 0 16 15"><rect x="1" y="1" width="14" height="13" fill="#d4e6fb" stroke="#86a6d8"/><rect x="1.500" y="1.500" width="13" height="3.500" fill="#f2a04a"/><path d="M4 11 L7 8.500 L9.500 10 L12 7.500" stroke="#3a9a3a" stroke-width="1.300" fill="none"/><rect x="3.500" y="6.500" width="3" height="1.500" fill="#e06a3a"/></svg>

<span class="t" style="left:666px">GJ: 2025 - Geschäftsjahr 2025 - O</span>
<svg class="si" style="left:848px;width:17px;height:17px;top:4.500px" viewBox="0 0 17 17"><circle cx="5.500" cy="5" r="3.600" fill="#fbe9a8" stroke="#d8a020" stroke-width="2"/><path d="M8 7.500 L14.500 14 M11.500 11 L13.500 9 M13.500 13 L15.500 11" stroke="#d8a020" stroke-width="2.200" stroke-linecap="round"/><path d="M9.500 12 L12 16" stroke="#d04030" stroke-width="2"/></svg>

<span class="t" style="left:867px">2025.0.0.0</span>
<svg class="si" style="left:932px;width:16px;height:16px;top:5px" viewBox="0 0 16 16"><circle cx="6" cy="4.500" r="3.200" fill="#2f8f4a"/><path d="M1 15 C1 9 11 9 11 15 Z" fill="#2a7ab8"/><circle cx="11.500" cy="6.500" r="2.600" fill="#3aa0d8"/><path d="M8 15.500 C8 11 15.500 11 15.500 15.500 Z" fill="#2f8f4a"/></svg>

<span class="t" style="left:951px">domis</span>
<svg class="si" style="left:994px;width:15px;height:17px;top:4.500px" viewBox="0 0 15 17"><circle cx="7.500" cy="5" r="3.600" fill="#f0c090"/><path d="M3.500 5 C3.500 0 11.500 0 11.500 5 C10 3 5 3 3.500 5 Z" fill="#c8782a"/><path d="M1.500 16.500 C1.500 9.500 13.500 9.500 13.500 16.500 Z" fill="#5a8a3a"/><path d="M6 10.500 L7.500 14 L9 10.500 Z" fill="#fff"/></svg>

<span class="t" style="left:1012px;transform:scaleX(.84)">Français (Suisse)</span>
<svg class="si" style="left:1110px;width:15px;height:17px;top:4.500px" viewBox="0 0 15 17"><path d="M1.500 1 L13.500 1 L13.500 9 C13.500 13 10 15.500 7.500 16.500 C5 15.500 1.500 13 1.500 9 Z" fill="#2458c0" stroke="#173c90"/><path d="M5 3.500 L5 9 C5 12 10 12 10 9 L10 3.500" stroke="#fff" stroke-width="1.800" fill="none"/></svg>

<span class="t" style="left:1127px">Finance.WinApp</span>
<svg class="si" style="left:1226px;width:15px;height:15px;top:6px" viewBox="0 0 15 15"><rect x="1" y="1" width="13" height="9" rx="1" fill="#3f72cc" stroke="#6a7688"/><rect x="2.500" y="2.500" width="10" height="6" fill="#6f9ce8"/><rect x="6" y="10" width="3" height="2" fill="#7a8698"/><rect x="3.500" y="12" width="8" height="1.800" fill="#8a96a8"/></svg>


<span class="t" style="left:1243px">1928x1168</span>
<svg class="si" style="left:1312px" viewBox="0 0 14 14"><path d="M1 8 L3 5 L11 5 L13 8 L13 11 L1 11 Z" fill="#d8d8d8" stroke="#8a8a8a"/><rect x="1" y="8" width="12" height="3" fill="#bdbdbd" stroke="#8a8a8a"/></svg>
<span class="t" style="left:1328px">103 360 248 bytes</span>
</div>

</div>
</body></html>
